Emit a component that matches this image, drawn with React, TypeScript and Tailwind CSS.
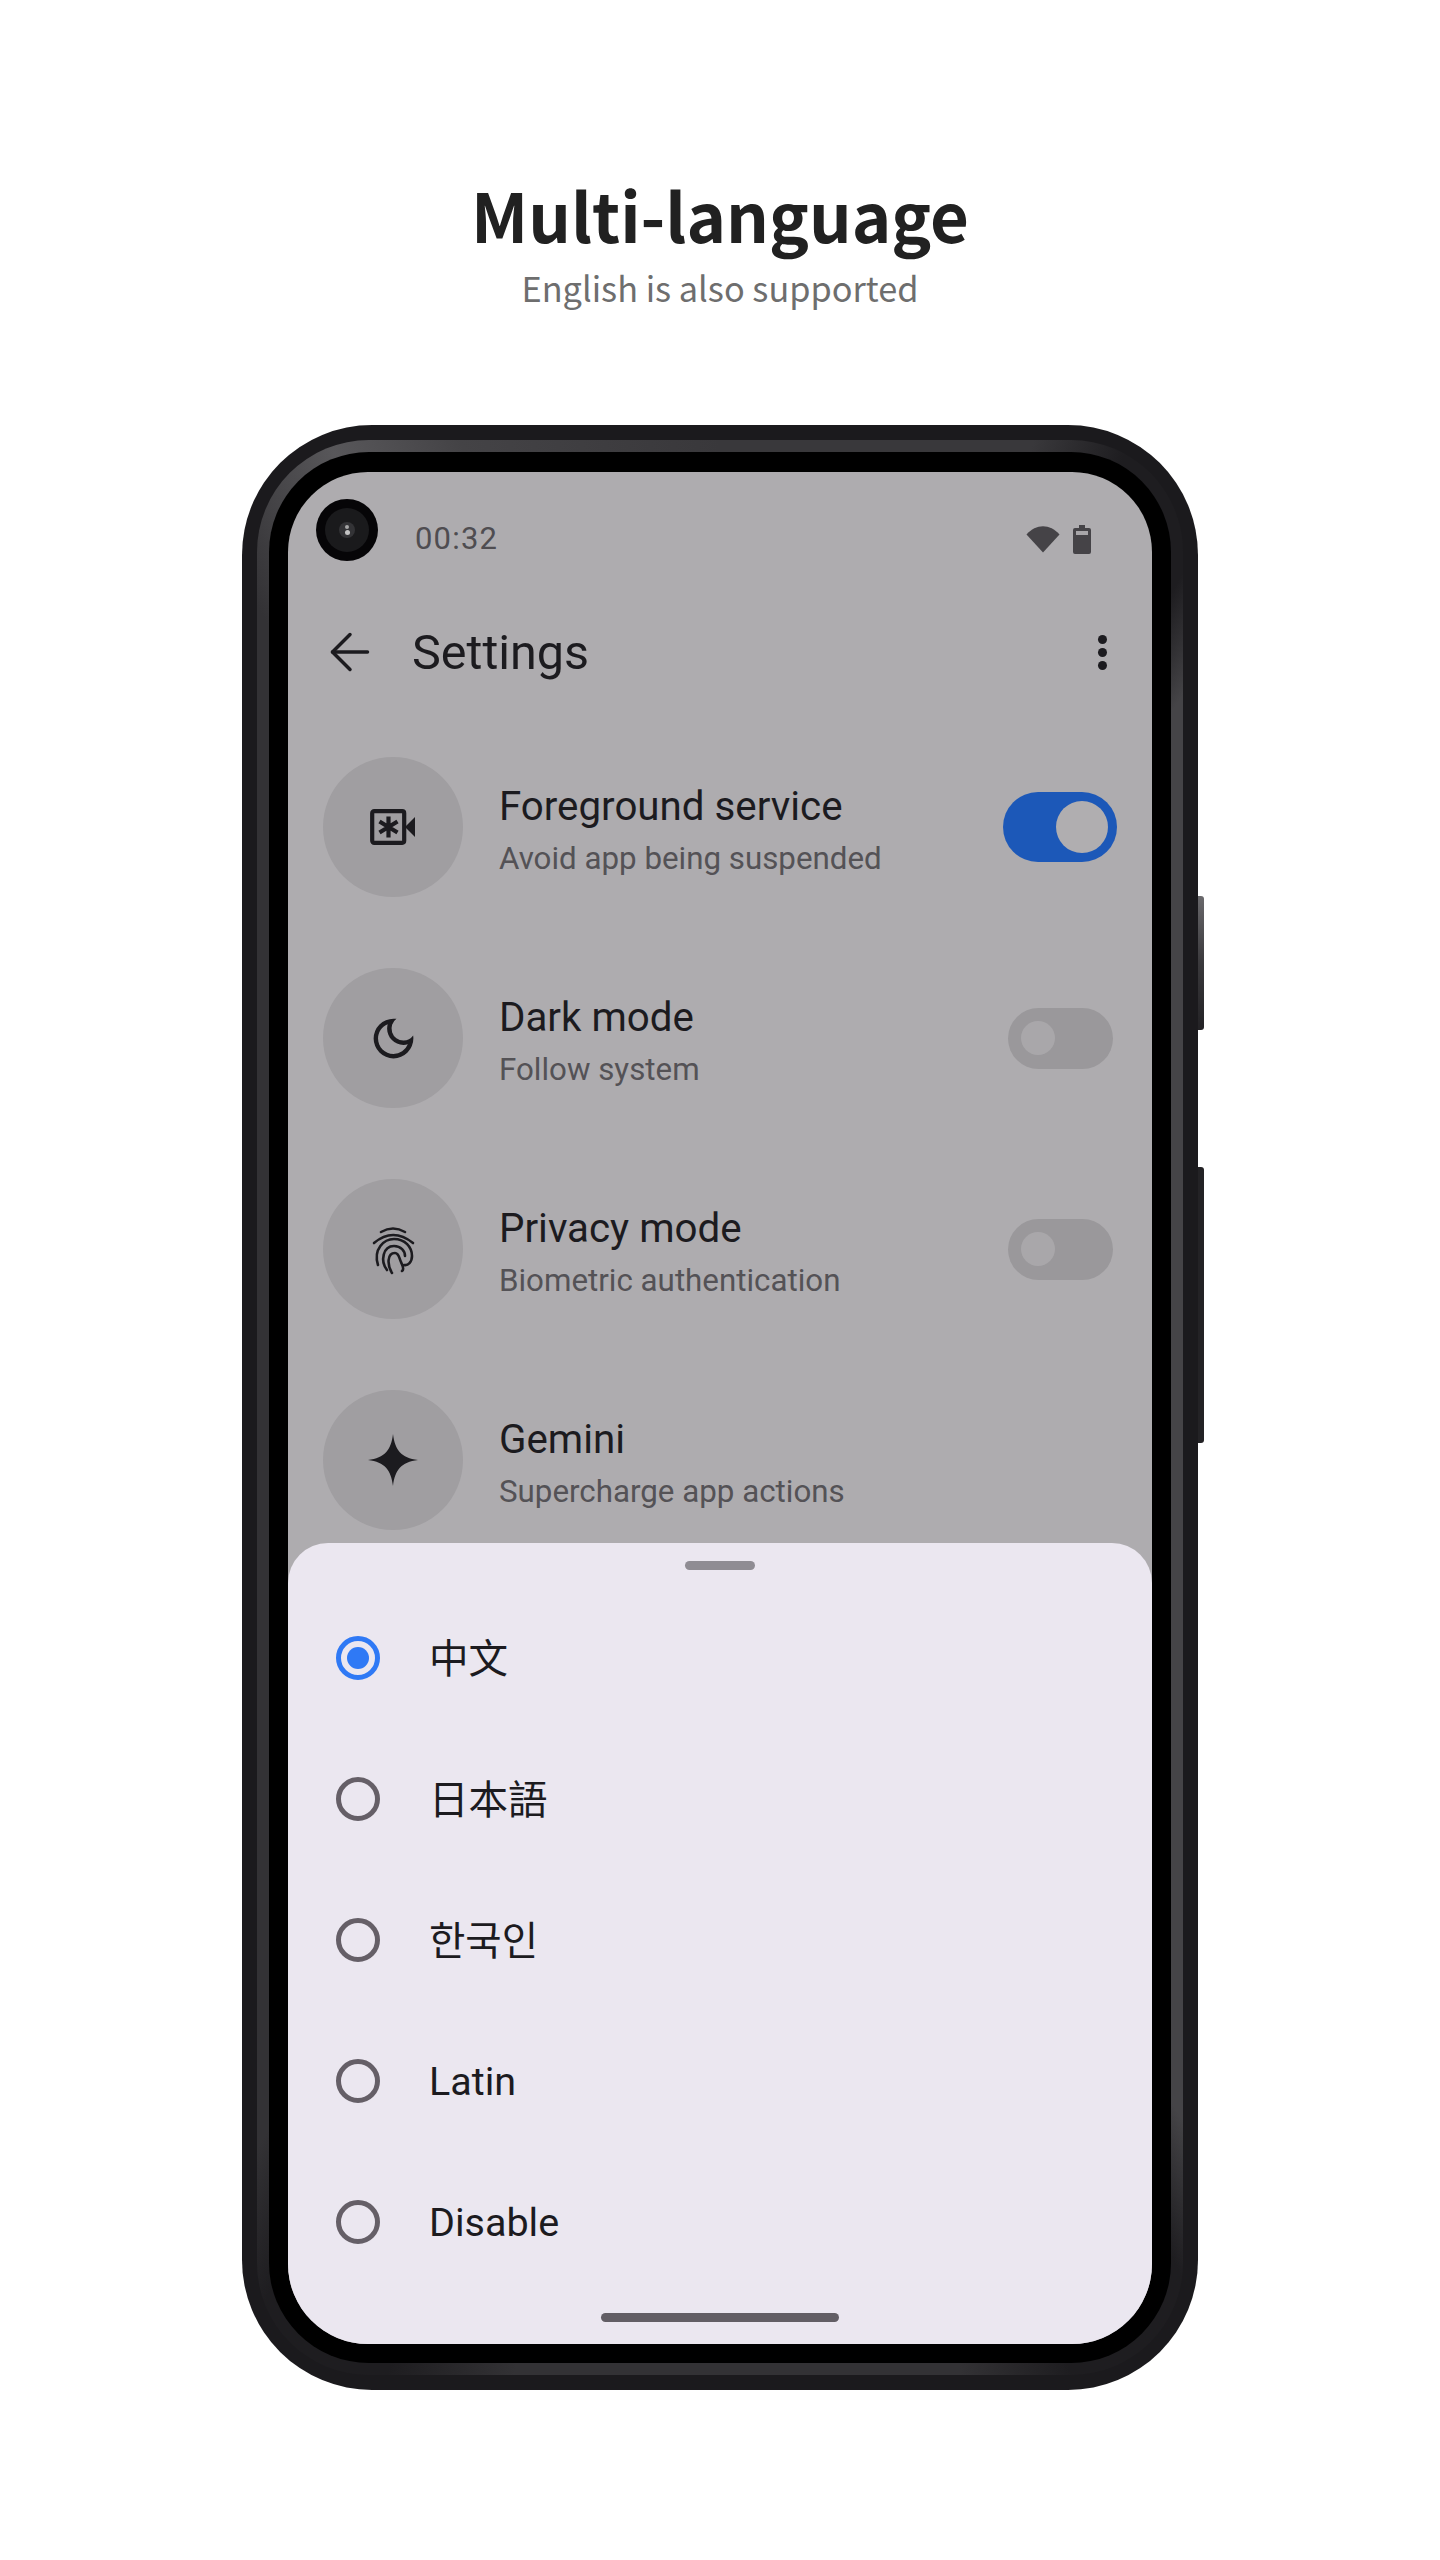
import { ArrowLeft } from "lucide-react";
import { MdOutlineDarkMode } from "react-icons/md";

const SANS = "font-['Roboto','Noto_Sans_CJK_SC',sans-serif]";

function CameraIcon() {
  return (
    <svg width="46" height="36" viewBox="0 0 46 36" fill="none">
      <rect x="2.2" y="2.2" width="32" height="31.6" rx="2" stroke="#1c1b1f" strokeWidth="4.2" />
      <path d="M18.5 7.5v21M9.5 12.5l18 11M27.5 12.5l-18 11" stroke="#1c1b1f" strokeWidth="4.2" />
      <path d="M35 18l10-10v20z" fill="#1c1b1f" />
    </svg>
  );
}

function FingerprintIcon() {
  return (
    <svg width="90" height="90" viewBox="0 0 90 90" fill="none" stroke="#1c1b1f" strokeWidth="2.6" strokeLinecap="round">
      <g transform="translate(2 1)">
        <path d="M31 27Q43 20 55 27" />
        <path d="M24 38Q43 22 63 38" />
        <path d="M28 60C23 44 34 34 44 34C55 34 62 42 62 51C62 57 58 61 54 60" />
        <path d="M37 65C30 56 33 41 44 41C51 41 55 46 55 51" />
        <path d="M42 68C37 60 37 48 45 48C49 48 49 53 51 57C52 60 55 64 52 66" />
      </g>
    </svg>
  );
}

function SparkIcon() {
  return (
    <svg width="50" height="52" viewBox="0 0 50 52">
      <path d="M25 0C27 16 33 24 50 26C33 28 27 36 25 52C23 36 17 28 0 26C17 24 23 16 25 0Z" fill="#1c1b1f" />
    </svg>
  );
}

function Toggle({ on }: { on?: boolean }) {
  if (on) {
    return (
      <div className="flex h-[70px] w-[114px] items-center justify-end rounded-full bg-[#1c58b8] pr-[9px]">
        <div className="size-[52px] rounded-full bg-[#b0aeb0]" />
      </div>
    );
  }
  return (
    <div className="flex h-[61px] w-[105px] items-center rounded-full bg-[#9a989b] pl-[13px]">
      <div className="size-[34px] rounded-full bg-[#a9a7aa]" />
    </div>
  );
}

function SettingRow({
  icon,
  title,
  subtitle,
  toggle,
  on,
}: {
  icon: React.ReactNode;
  title: string;
  subtitle: string;
  toggle?: boolean;
  on?: boolean;
}) {
  return (
    <div className="flex h-[140px] items-center px-[35px]">
      <div className="flex size-[140px] shrink-0 items-center justify-center rounded-full bg-[#a09ea1]">{icon}</div>
      <div className="ml-[36px] flex flex-1 flex-col pt-[11px]">
        <div className="text-[40.3px] leading-[52px] text-[#1c1b1f]">{title}</div>
        <div className="text-[31.3px] leading-[52px] text-[#545256]">{subtitle}</div>
      </div>
      {toggle && (
        <div className="flex w-[114px] justify-center">
          <Toggle on={on} />
        </div>
      )}
    </div>
  );
}

function LangRow({ label, selected, font }: { label: string; selected?: boolean; font?: string }) {
  return (
    <div className="flex h-[141px] items-center pl-[48px]">
      <div
        className={
          selected
            ? "flex size-[44px] items-center justify-center rounded-full border-[5px] border-[#2f79f5]"
            : "size-[44px] rounded-full border-[5px] border-[#655f67]"
        }
      >
        {selected && <div className="size-[22px] rounded-full bg-[#2f79f5]" />}
      </div>
      <div className={`ml-[49px] text-[39.5px] leading-[50px] text-[#1c1b1f] ${font ?? "pt-[2px]"}`}>{label}</div>
    </div>
  );
}

function Screen() {
  return (
    <div className={`relative h-[1872px] w-[864px] overflow-hidden rounded-[80px] bg-[#aeacaf] ${SANS}`}>
      {/* punch hole camera */}
      <div className="absolute left-[28px] top-[27px] flex size-[62px] items-center justify-center rounded-full bg-[#060507]">
        <div className="flex size-[44px] items-center justify-center rounded-full bg-[#1a1a1c]">
          <div className="flex size-[16px] flex-col items-center justify-center gap-[1px] rounded-full bg-[#333336]">
            <div className="size-[4px] rounded-full bg-[#a6a6a6]" />
            <div className="size-[5px] rounded-full bg-[#c4c4c4]" />
          </div>
        </div>
      </div>

      <div className="flex h-[130px] items-center justify-between pl-[127px] pr-[61px] pt-[4px]">
        <span className="text-[31px] leading-[40px] tracking-[1.2px] text-[#4f4d51]">00:32</span>
        <div className="flex items-center gap-[13px]">
          <svg width="34" height="28" viewBox="0 0 34 28">
            <path d="M0.5 9.5C10 -1.5 24 -1.5 33.5 9.5L17 27.5Z" fill="#454347" />
          </svg>
          <svg width="18" height="29" viewBox="0 0 18 29">
            <path d="M6 0h6v3h4a2 2 0 0 1 2 2v22a2 2 0 0 1-2 2H2a2 2 0 0 1-2-2V5a2 2 0 0 1 2-2h4z" fill="#454347" />
            <rect x="3" y="6" width="12" height="4" fill="#a8a6a9" />
          </svg>
        </div>
      </div>

      <div className="flex h-[100px] items-center pl-[32px] pr-[45px]">
        <ArrowLeft size={60} strokeWidth={1.4} color="#1c1b1f" className="shrink-0" />
        <div className="ml-[32px] flex-1 pt-[2px] text-[48.5px] leading-[60px] text-[#1c1b1f]">Settings</div>
        <div className="flex flex-col gap-[4px]">
          <div className="size-[9px] rounded-full bg-[#1c1b1f]" />
          <div className="size-[9px] rounded-full bg-[#1c1b1f]" />
          <div className="size-[9px] rounded-full bg-[#1c1b1f]" />
        </div>
      </div>

      <div className="mt-[55px] flex flex-col gap-[71px]">
        <SettingRow icon={<CameraIcon />} title="Foreground service" subtitle="Avoid app being suspended" toggle on />
        <SettingRow icon={<MdOutlineDarkMode size={53} color="#1c1b1f" />} title="Dark mode" subtitle="Follow system" toggle />
        <SettingRow icon={<FingerprintIcon />} title="Privacy mode" subtitle="Biometric authentication" toggle />
        <SettingRow icon={<SparkIcon />} title="Gemini" subtitle="Supercharge app actions" />
      </div>

      {/* language bottom sheet */}
      <div className="absolute inset-x-0 bottom-0 flex h-[801px] flex-col rounded-t-[40px] bg-[#ebe7f0]">
        <div className="mt-[18px] h-[9px] w-[70px] self-center rounded-full bg-[#8f8c93]" />
        <div className="mt-[17px] flex flex-col">
          <LangRow label="中文" selected font="pt-[4px]" />
          <LangRow label="日本語" font="pt-[4px] font-['Roboto','Noto_Sans_CJK_TC',sans-serif]" />
          <LangRow label="한국인" font="pt-[4px] font-['Roboto','Noto_Sans_CJK_KR',sans-serif]" />
          <LangRow label="Latin" />
          <LangRow label="Disable" />
        </div>
        <div className="absolute bottom-[22px] left-[313px] h-[9px] w-[238px] rounded-full bg-[#625e65]" />
      </div>
    </div>
  );
}

export default function App() {
  return (
    <div className="flex h-[2560px] w-[1440px] flex-col items-center bg-white font-['Noto_Sans_CJK_SC',sans-serif]">
      <h1 className="mt-[167px] text-[67px] font-bold leading-[94px] text-[#212121]">Multi-language</h1>
      <p className="mt-[1px] text-[34.3px] leading-[50px] text-[#6e6e6e]">English is also supported</p>

      <div className="relative mt-[113px] h-[1965px] w-[956px] rounded-[130px] bg-[#1b1a1d] p-[15px]">
        {/* side buttons */}
        <div className="absolute left-full top-[471px] h-[134px] w-[6px] rounded-r-[3px] bg-gradient-to-b from-[#6a696c] via-[#3a393c] to-[#232225]" />
        <div className="absolute left-full top-[742px] h-[276px] w-[6px] rounded-r-[3px] bg-[#232225]" />
        <div className="h-full rounded-[112px] bg-[conic-gradient(#39383b_0deg,#39383b_18deg,#1e1d20_23deg,#1e1d20_29deg,#454447_33deg,#454447_147deg,#1e1d20_152deg,#1e1d20_160deg,#333235_166deg,#333235_192deg,#1e1d20_199deg,#1e1d20_207deg,#333235_212deg,#333235_330deg,#58575a_338deg,#444346_345deg,#39383b_360deg)] p-[12px]">
          <div className="h-full rounded-[100px] bg-black px-[19px] pb-[19px] pt-[20px]">
            <Screen />
          </div>
        </div>
      </div>
    </div>
  );
}
